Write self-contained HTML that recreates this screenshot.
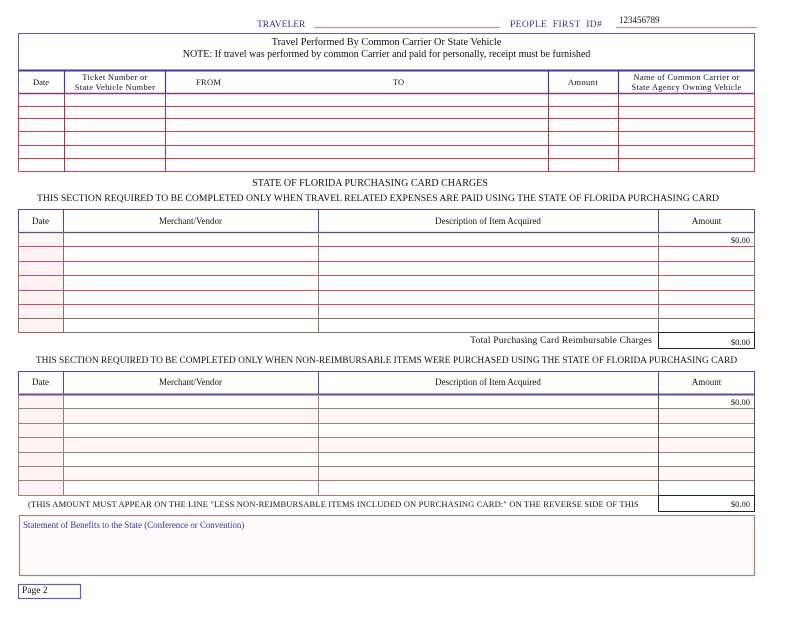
<!DOCTYPE html>
<html><head><meta charset="utf-8"><style>
html,body{margin:0;padding:0;background:#fff;width:800px;height:618px;overflow:hidden;position:relative;font-family:"Liberation Serif",serif;color:#111}
.t{position:absolute;white-space:nowrap;font-size:9px;line-height:10px}
.c{text-align:center}
svg{position:absolute;left:0;top:0}
</style></head><body>
<svg width="800" height="618">
<line x1="314" y1="27.5" x2="500" y2="27.5" stroke="#c09098" stroke-width="1.2"/>
<line x1="616" y1="27.5" x2="757" y2="27.5" stroke="#c09098" stroke-width="1.2"/>
<rect x="18.5" y="33.5" width="736" height="37" fill="none" stroke="#5a5ab8" stroke-width="1"/>
<line x1="18" y1="70.5" x2="755" y2="70.5" stroke="#3a3aa0" stroke-width="2"/>
<line x1="18.5" y1="70" x2="18.5" y2="93" stroke="#5a5ab8"/>
<line x1="754.5" y1="70" x2="754.5" y2="93" stroke="#5a5ab8"/>
<g stroke="#3a3aa0" stroke-width="1.2"><line x1="64.5" y1="70" x2="64.5" y2="93"/><line x1="165.5" y1="70" x2="165.5" y2="93"/><line x1="548.5" y1="70" x2="548.5" y2="93"/><line x1="618.5" y1="70" x2="618.5" y2="93"/></g>
<line x1="18" y1="93.5" x2="755" y2="93.5" stroke="#8a3a7a" stroke-width="1.5"/>
<g stroke="#d04050" stroke-width="1"><line x1="18" y1="106.5" x2="755" y2="106.5"/><line x1="18" y1="118.5" x2="755" y2="118.5"/><line x1="18" y1="131.5" x2="755" y2="131.5"/><line x1="18" y1="145.5" x2="755" y2="145.5"/><line x1="18" y1="158.5" x2="755" y2="158.5"/><line x1="18" y1="171.5" x2="755" y2="171.5"/>
<line x1="18.5" y1="93" x2="18.5" y2="172"/><line x1="754.5" y1="93" x2="754.5" y2="172"/></g>
<g stroke="#b03040" stroke-width="1"><line x1="64.5" y1="93" x2="64.5" y2="172"/><line x1="165.5" y1="93" x2="165.5" y2="172"/><line x1="548.5" y1="93" x2="548.5" y2="172"/><line x1="618.5" y1="93" x2="618.5" y2="172"/></g>
<rect x="19" y="233" width="44" height="99" fill="#fff3f6"/>
<rect x="18.5" y="209.5" width="736" height="23" fill="none" stroke="#4a4aa8"/>
<line x1="18" y1="232.5" x2="755" y2="232.5" stroke="#5a4a9a" stroke-width="1.2"/>
<g stroke="#4a4aa8"><line x1="63.5" y1="209" x2="63.5" y2="232"/><line x1="318.5" y1="209" x2="318.5" y2="232"/><line x1="658.5" y1="209" x2="658.5" y2="232"/></g>
<g stroke="#d84858" stroke-width="1"><line x1="18" y1="246.5" x2="755" y2="246.5"/><line x1="18" y1="261.5" x2="755" y2="261.5"/><line x1="18" y1="275.5" x2="755" y2="275.5"/><line x1="18" y1="290.5" x2="755" y2="290.5"/><line x1="18" y1="304.5" x2="755" y2="304.5"/></g>
<g stroke="#8a7060" stroke-width="1"><line x1="18" y1="318.5" x2="755" y2="318.5"/><line x1="18" y1="332.5" x2="755" y2="332.5"/>
<line x1="18.5" y1="232" x2="18.5" y2="333"/><line x1="754.5" y1="232" x2="754.5" y2="333"/><line x1="63.5" y1="232" x2="63.5" y2="333"/><line x1="318.5" y1="232" x2="318.5" y2="333"/><line x1="658.5" y1="232" x2="658.5" y2="333"/></g>
<rect x="658.5" y="332.5" width="96" height="16" fill="none" stroke="#222"/>
<rect x="19" y="395" width="44" height="100" fill="#fff3f6"/>
<rect x="64" y="409" width="690" height="14" fill="#fff6f8"/>
<rect x="64" y="438" width="690" height="14" fill="#fff6f8"/>
<rect x="64" y="466" width="690" height="14" fill="#fff6f8"/>
<rect x="18.5" y="371.5" width="736" height="23" fill="none" stroke="#4a4aa8"/>
<line x1="18" y1="394.5" x2="755" y2="394.5" stroke="#6a4a9a" stroke-width="2"/>
<g stroke="#4a4aa8"><line x1="63.5" y1="371" x2="63.5" y2="394"/><line x1="318.5" y1="371" x2="318.5" y2="394"/><line x1="658.5" y1="371" x2="658.5" y2="394"/></g>
<g stroke="#9a8070" stroke-width="1"><line x1="18" y1="408.5" x2="755" y2="408.5"/><line x1="18" y1="423.5" x2="755" y2="423.5"/><line x1="18" y1="437.5" x2="755" y2="437.5"/><line x1="18" y1="452.5" x2="755" y2="452.5"/><line x1="18" y1="466.5" x2="755" y2="466.5"/><line x1="18" y1="480.5" x2="755" y2="480.5"/><line x1="18" y1="495.5" x2="755" y2="495.5"/>
<line x1="18.5" y1="394" x2="18.5" y2="496"/><line x1="63.5" y1="394" x2="63.5" y2="496"/><line x1="318.5" y1="394" x2="318.5" y2="496"/></g>
<g stroke="#555"><line x1="658.5" y1="394" x2="658.5" y2="496"/><line x1="754.5" y1="394" x2="754.5" y2="496"/></g>
<rect x="658.5" y="495.5" width="96" height="16" fill="none" stroke="#222"/>
<rect x="19.5" y="515.5" width="735" height="60" fill="#fffafb" stroke="#9a8878" stroke-width="1.2"/>
<rect x="18.5" y="584.5" width="62" height="14" fill="none" stroke="#6a5ab8" stroke-width="1.2"/>
</svg>

<div class="t" style="left:257px;top:20px;color:#33339a;font-size:9.5px">TRAVELER</div>
<div class="t" style="left:510px;top:20px;color:#33339a;font-size:9.5px;letter-spacing:0.4px">PEOPLE&nbsp; FIRST&nbsp; ID#</div>
<div class="t" style="left:619px;top:15px;font-size:9px">123456789</div>

<div class="t c" style="left:18px;width:737px;top:37px;font-size:10.3px;line-height:11px">Travel Performed By Common Carrier Or State Vehicle</div>
<div class="t c" style="left:18px;width:737px;top:49px;font-size:10px;line-height:11px">NOTE: If travel was performed by common Carrier and paid for personally, receipt must be furnished</div>

<div class="t c" style="left:18px;width:46px;top:77px;font-size:8.5px">Date</div>
<div class="t c" style="left:64px;width:102px;top:72px;font-size:8.5px;letter-spacing:0.3px">Ticket Number or<br>State Vehicle Number</div>
<div class="t" style="left:196px;top:77px;font-size:8.5px;letter-spacing:0.3px">FROM</div>
<div class="t" style="left:393px;top:77px;font-size:8.5px">TO</div>
<div class="t c" style="left:548px;width:70px;top:77px;font-size:8.5px;letter-spacing:0.4px">Amount</div>
<div class="t c" style="left:618px;width:137px;top:72px;font-size:8.5px;letter-spacing:0.3px">Name of Common Carrier or<br>State Agency Owning Vehicle</div>

<div class="t c" style="left:0;width:740px;top:179px;font-size:10px">STATE OF FLORIDA PURCHASING CARD CHARGES</div>
<div class="t c" style="left:0;width:756px;top:194px;font-size:9.7px">THIS SECTION REQUIRED TO BE COMPLETED ONLY WHEN TRAVEL RELATED EXPENSES ARE PAID USING THE STATE OF FLORIDA PURCHASING CARD</div>

<div class="t c" style="left:18px;width:45px;top:216px">Date</div>
<div class="t c" style="left:63px;width:255px;top:216px">Merchant/Vendor</div>
<div class="t c" style="left:318px;width:340px;top:216px">Description of Item Acquired</div>
<div class="t c" style="left:658px;width:97px;top:216px">Amount</div>
<div class="t" style="right:50px;top:235px;font-size:8.5px">$0.00</div>
<div class="t" style="right:148px;top:336px;font-size:9.5px;letter-spacing:0.2px">Total Purchasing Card Reimbursable Charges</div>
<div class="t" style="right:50px;top:337px;font-size:8.5px">$0.00</div>

<div class="t c" style="left:0;width:773px;top:356px;font-size:9.4px">THIS SECTION REQUIRED TO BE COMPLETED ONLY WHEN NON-REIMBURSABLE ITEMS WERE PURCHASED USING THE STATE OF FLORIDA PURCHASING CARD</div>

<div class="t c" style="left:18px;width:45px;top:377px">Date</div>
<div class="t c" style="left:63px;width:255px;top:377px">Merchant/Vendor</div>
<div class="t c" style="left:318px;width:340px;top:377px">Description of Item Acquired</div>
<div class="t c" style="left:658px;width:97px;top:377px">Amount</div>
<div class="t" style="right:50px;top:397px;font-size:8.5px">$0.00</div>
<div class="t" style="left:28px;top:499px;font-size:8.5px;letter-spacing:0.15px">(THIS AMOUNT MUST APPEAR ON THE LINE "LESS NON-REIMBURSABLE ITEMS INCLUDED ON PURCHASING CARD:" ON THE REVERSE SIDE OF THIS</div>
<div class="t" style="right:50px;top:499px;font-size:8.5px">$0.00</div>

<div class="t" style="left:23px;top:520px;font-size:8.9px;color:#33339a">Statement of Benefits to the State (Conference or Convention)</div>
<div class="t" style="left:22px;top:586px;font-size:9.5px">Page 2</div>
</body></html>
